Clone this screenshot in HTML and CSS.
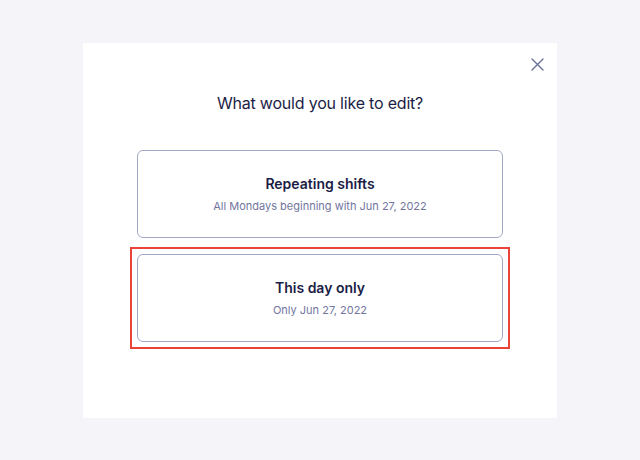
FILE: index.html
```html
<!DOCTYPE html>
<html lang="en">
<head>
    <meta charset="UTF-8">
    <meta name="viewport" content="width=device-width, initial-scale=1.0">
    <title>Edit shift</title>
    <link rel="stylesheet" href="styles.css">
</head>
<body>
    <div class="modal">
        <button class="btn-close" aria-label="Close">
            <svg width="13" height="13" viewBox="0 0 13 13">
                <path d="M1 1L12 12M12 1L1 12" stroke="#6b7099" stroke-width="1.4" fill="none" stroke-linecap="round"/>
            </svg>
        </button>

        <h2 class="modal-title">What would you like to edit?</h2>

        <div class="options">
            <button class="option">
                <span class="option-title">Repeating shifts</span>
                <span class="option-sub">All Mondays beginning with Jun 27, 2022</span>
            </button>
            <button class="option selected">
                <span class="option-title">This day only</span>
                <span class="option-sub">Only Jun 27, 2022</span>
            </button>
        </div>
    </div>
</body>
</html>
```

FILE: styles.css
```css
:root {
    --navy: #1b1d46;
    --muted: #7276a0;
    --border: #a3a7c6;
    --highlight: #ec4338;
}

* {
    margin: 0;
    padding: 0;
    box-sizing: border-box;
    font-family: 'Inter', sans-serif;
}

body {
    background-color: #f4f4f9;
    height: 100vh;
    display: flex;
    align-items: center;
    justify-content: center;
}

.modal {
    position: relative;
    background: #fff;
    width: 474px;
    height: 375px;
    padding: 48px 54px 0;
}

.btn-close {
    position: absolute;
    top: 15px;
    right: 13px;
    width: 13px;
    height: 13px;
    background: none;
    border: none;
    cursor: pointer;
    display: flex;
}

.modal-title {
    text-align: center;
    font-size: 16px;
    line-height: 24px;
    font-weight: 400;
    letter-spacing: -0.2px;
    color: var(--navy);
    margin-bottom: 35px;
}

.options {
    display: flex;
    flex-direction: column;
    gap: 16px;
}

.option {
    position: relative;
    height: 88px;
    background: #fff;
    border: 1px solid var(--border);
    border-radius: 6px;
    display: flex;
    flex-direction: column;
    align-items: center;
    justify-content: center;
    gap: 4px;
    cursor: pointer;
}

/* marca de selección */
.option.selected::after {
    content: '';
    position: absolute;
    top: -8px;
    left: -8px;
    right: -8px;
    bottom: -8px;
    border: 2px solid var(--highlight);
}

.option-title {
    font-size: 14px;
    line-height: 20px;
    font-weight: 600;
    color: var(--navy);
}

.option-sub {
    font-size: 11px;
    line-height: 16px;
    color: var(--muted);
}
```
